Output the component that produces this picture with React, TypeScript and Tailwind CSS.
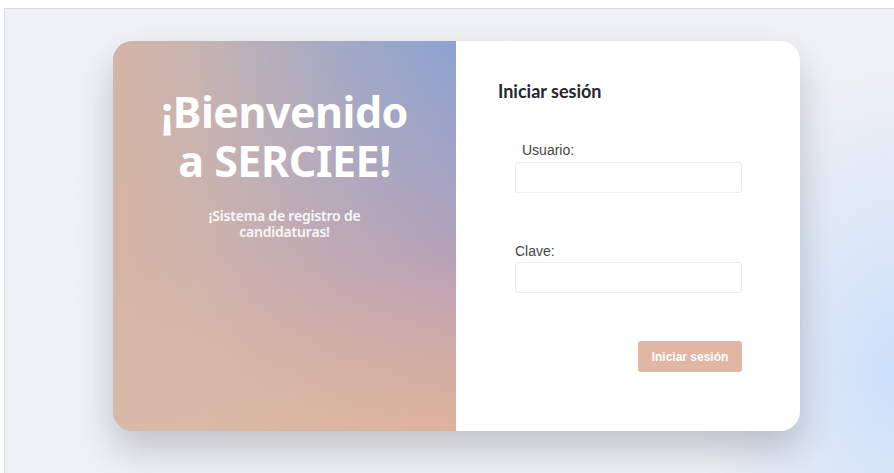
export default function App() {
  return (
    <div className="w-full h-[473px] bg-white pt-2 pl-1 overflow-hidden">
      {/* page frame */}
      <div
        className="h-full border-t border-l border-[#dadbde] pl-[108px] pt-[32px] bg-[radial-gradient(ellipse_200px_330px_at_100%_78%,#cde0fa,transparent),linear-gradient(180deg,#f1f2f5,#eff1f6)]"
      >
        <div className="flex w-[687px] h-[390px] rounded-[20px] overflow-hidden shadow-[0_18px_36px_rgba(40,45,60,0.24)]">
          {/* welcome panel */}
          <div className="relative w-[343px] h-full bg-[linear-gradient(180deg,#8da3d2_0%,#a3a3c4_35%,#bfa1b2_65%,#dfa78f_100%)]">
            <div className="absolute inset-0 bg-[linear-gradient(90deg,#d4b4a5_0%,rgba(213,184,168,0.8)_25%,rgba(213,184,168,0.25)_70%,rgba(213,184,168,0)_100%)]" />
            <div className="absolute inset-0 bg-[linear-gradient(0deg,rgba(218,190,170,0.5)_0%,rgba(218,190,170,0)_45%)]" />
            <div className="relative flex flex-col items-center pt-[46px] text-white font-['Noto_Sans',sans-serif]">
              <h1 className="text-[43px] leading-[49px] font-bold text-center tracking-[-0.5px]">
                ¡Bienvenido
                <br />a SERCIEE!
              </h1>
              <p className="mt-[23px] text-[14px] leading-[16px] font-semibold text-center text-white/90 tracking-[-0.2px]">
                ¡Sistema de registro de
                <br />
                candidaturas!
              </p>
            </div>
          </div>
          {/* login form */}
          <div className="w-[344px] h-full bg-white pl-[42px] pt-[38px]">
            <h2 className="font-['Lato',sans-serif] font-bold text-[18px] leading-[24px] text-[#25262b]">
              Iniciar sesión
            </h2>
            <div className="pl-[17px] font-['Liberation_Sans',Arial,sans-serif] text-[14px] text-[#444]">
              <div className="mt-[39px] pl-[7px] leading-[16px]">Usuario:</div>
              <input className="mt-[4px] block w-[227px] h-[31px] border border-[#ececec] rounded-[3px] outline-none" />
              <div className="mt-[50px] leading-[16px]">Clave:</div>
              <input
                type="password"
                className="mt-[3px] block w-[227px] h-[31px] border border-[#ececec] rounded-[3px] outline-none"
              />
              <div className="flex justify-end w-[227px] mt-[48px]">
                <button className="w-[104px] h-[31px] rounded-[3px] bg-[#e0b6a4] text-white font-bold text-[12px]">
                  Iniciar sesión
                </button>
              </div>
            </div>
          </div>
        </div>
      </div>
    </div>
  );
}
